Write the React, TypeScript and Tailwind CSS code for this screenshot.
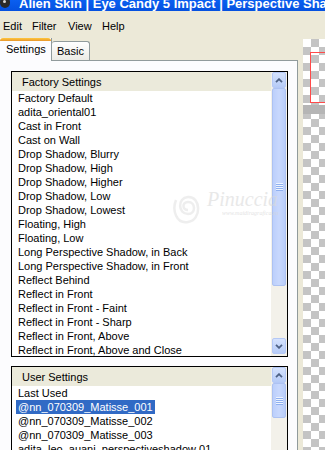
import React from 'react';

const factory = [
  'Factory Default',
  'adita_oriental01',
  'Cast in Front',
  'Cast on Wall',
  'Drop Shadow, Blurry',
  'Drop Shadow, High',
  'Drop Shadow, Higher',
  'Drop Shadow, Low',
  'Drop Shadow, Lowest',
  'Floating, High',
  'Floating, Low',
  'Long Perspective Shadow, in Back',
  'Long Perspective Shadow, in Front',
  'Reflect Behind',
  'Reflect in Front',
  'Reflect in Front - Faint',
  'Reflect in Front - Sharp',
  'Reflect in Front, Above',
  'Reflect in Front, Above and Close',
];

const user = [
  'Last Used',
  '@nn_070309_Matisse_001',
  '@nn_070309_Matisse_002',
  '@nn_070309_Matisse_003',
  'adita_leo_auani_perspectiveshadow 01',
];

function Arrow({ up }: { up: boolean }) {
  return (
    <svg width="8" height="5" viewBox="0 0 8 5">
      <path d={up ? 'M1 4.2 L4 1.2 L7 4.2' : 'M1 0.8 L4 3.8 L7 0.8'} fill="none" stroke="#4d6185" strokeWidth="1.8" />
    </svg>
  );
}

function ScrollButton({ up }: { up: boolean }) {
  return (
    <div className="h-[16px] shrink-0 rounded-[2px] border border-[#b4c8f6] bg-gradient-to-b from-[#d5e2fd] to-[#b6cbf7] flex items-center justify-center">
      <Arrow up={up} />
    </div>
  );
}

function Thumb({ h }: { h: string }) {
  return (
    <div className={`${h} shrink-0 rounded-[2px] border border-[#adc2f2] bg-gradient-to-r from-[#bccffb] via-[#c8d8fd] to-[#b9cdfa] flex items-center justify-center`}>
      <div className="flex flex-col w-[7px]">
        <div className="h-px bg-[#eef4fe]" />
        <div className="h-px bg-[#8fb0f0]" />
        <div className="h-px bg-[#eef4fe]" />
        <div className="h-px bg-[#8fb0f0]" />
        <div className="h-px bg-[#eef4fe]" />
        <div className="h-px bg-[#8fb0f0]" />
        <div className="h-px bg-[#eef4fe]" />
        <div className="h-px bg-[#8fb0f0]" />
      </div>
    </div>
  );
}

function ListBox({ title, items, selected, boxH, listH, thumbH, down }: {
  title: string; items: string[]; selected?: number; boxH: string; listH: string; thumbH: string; down: boolean;
}) {
  return (
    <div className={`${boxH} w-[277px] shrink-0 border border-black flex bg-white`}>
      <div className="w-[259px] flex flex-col">
        <div className="h-[19px] shrink-0 bg-[#ebeadb] pl-[10px] flex items-center leading-[14px]">{title}</div>
        <div className={`${listH} overflow-hidden`}>
          {items.map((it, i) => (
            <div key={it} className="h-[14px] leading-[14px] pl-[4px] whitespace-nowrap">
              <span className={i === selected ? 'px-[2px] py-[1px] bg-[#316ac5] text-white' : 'px-[2px]'}>{it}</span>
            </div>
          ))}
        </div>
      </div>
      <div className="w-[16px] px-[1px] flex flex-col bg-[#f3f1ea]">
        <ScrollButton up />
        <Thumb h={thumbH} />
        <div className="flex-1" />
        {down && <ScrollButton up={false} />}
        {down && <div className="h-[2px]" />}
      </div>
    </div>
  );
}

export default function App() {
  return (
    <div className="relative w-[325px] h-[450px] overflow-hidden bg-[#ece9d8] font-['Liberation_Sans',Arial,sans-serif] text-[11px] text-black flex flex-col">
      {/* title bar */}
      <div className="h-[11px] shrink-0 overflow-hidden bg-gradient-to-b from-[#0a5ff0] to-[#0551e0] flex">
        <div className="w-[19px] shrink-0 relative">
          <div className="absolute left-[0px] top-[-3px] w-[10px] h-[11px] rounded-full bg-[#2a2a2a]" />
          <div className="absolute left-[3px] top-[0px] w-[3px] h-[3px] rounded-full bg-[#d8d8d8]" />
        </div>
        <div className="-mt-[3px] leading-[13px] text-[13px] font-bold text-white whitespace-nowrap">
          Alien Skin&nbsp;| Eye Candy 5 Impact | Perspective Shadow
        </div>
      </div>

      {/* menu bar */}
      <div className="h-[26px] shrink-0 flex items-start pt-[8px] leading-[14px] pl-[3px]">
        <span className="w-[29px]">Edit</span>
        <span className="w-[36px]">Filter</span>
        <span className="w-[34px]">View</span>
        <span>Help</span>
      </div>

      <div className="flex flex-1 min-h-0">
        <div className="w-[298px] shrink-0 flex flex-col">
          {/* tabs */}
          <div className="h-[23px] shrink-0 flex items-end">
            <div className="relative z-10 h-[23px] -mb-px w-[52px] bg-[#fcfcfe] border-r border-[#919b9c] flex flex-col">
              <div className="h-[3px] rounded-t-[3px] bg-gradient-to-b from-[#ffc83c] to-[#e8962c]" />
              <div className="pl-[6px] pt-[1px] leading-[14px]">Settings</div>
            </div>
            <div className="h-[19px] w-[38px] rounded-t-[3px] border border-b-0 border-l-0 border-[#919b9c] bg-gradient-to-b from-white to-[#ecebe5] pl-[5px] pt-[2px] leading-[14px]">
              Basic
            </div>
          </div>

          {/* panel */}
          <div className="flex-1 min-h-0 border-t border-r border-[#919b9c] bg-[#fcfcfe] pl-[11px] pt-[10px] flex flex-col">
            <ListBox title="Factory Settings" items={factory} boxH="h-[286px]" listH="h-[265px]" thumbH="h-[198px]" down />
            <div className="h-[9px] shrink-0" />
            <ListBox title="User Settings" items={user} selected={1} boxH="h-[100px]" listH="h-[80px]" thumbH="h-[35px]" down={false} />
          </div>
        </div>

        <div className="w-[5px] shrink-0" />

        {/* preview */}
        <div className="relative flex-1 mt-[2px] overflow-hidden bg-[image:conic-gradient(#c4c4c4_25%,#ffffff_0_50%,#c4c4c4_0_75%,#ffffff_0)] bg-[length:16px_16px]">
          <div className="absolute left-[7px] top-[13px] w-[30px] h-[51px] border border-[#ff4a4a]" />
          <div className="absolute left-0 right-0 top-[66px] h-[9px] bg-[#b5b5b5]" />
        </div>
      </div>

      {/* watermark */}
      <svg className="absolute left-[168px] top-[180px] opacity-40" width="40" height="55" viewBox="0 0 40 55">
        <path d="M20 30 C14 30 14 22 20 22 C28 22 28 34 20 34 C10 34 9 18 20 17 C33 16 34 40 20 42 C8 44 4 30 8 20" fill="none" stroke="#d6d6d6" strokeWidth="2.5" />
      </svg>
      <div className="absolute left-[207px] top-[184px] text-[20px] italic text-[#dadada] opacity-60 font-['Liberation_Serif',serif]">Pinuccia</div>
      <div className="absolute left-[222px] top-[209px] text-[6px] italic text-[#d8d8d8] opacity-70 font-['Liberation_Serif',serif]">www.maidiragrafica.eu</div>
    </div>
  );
}
